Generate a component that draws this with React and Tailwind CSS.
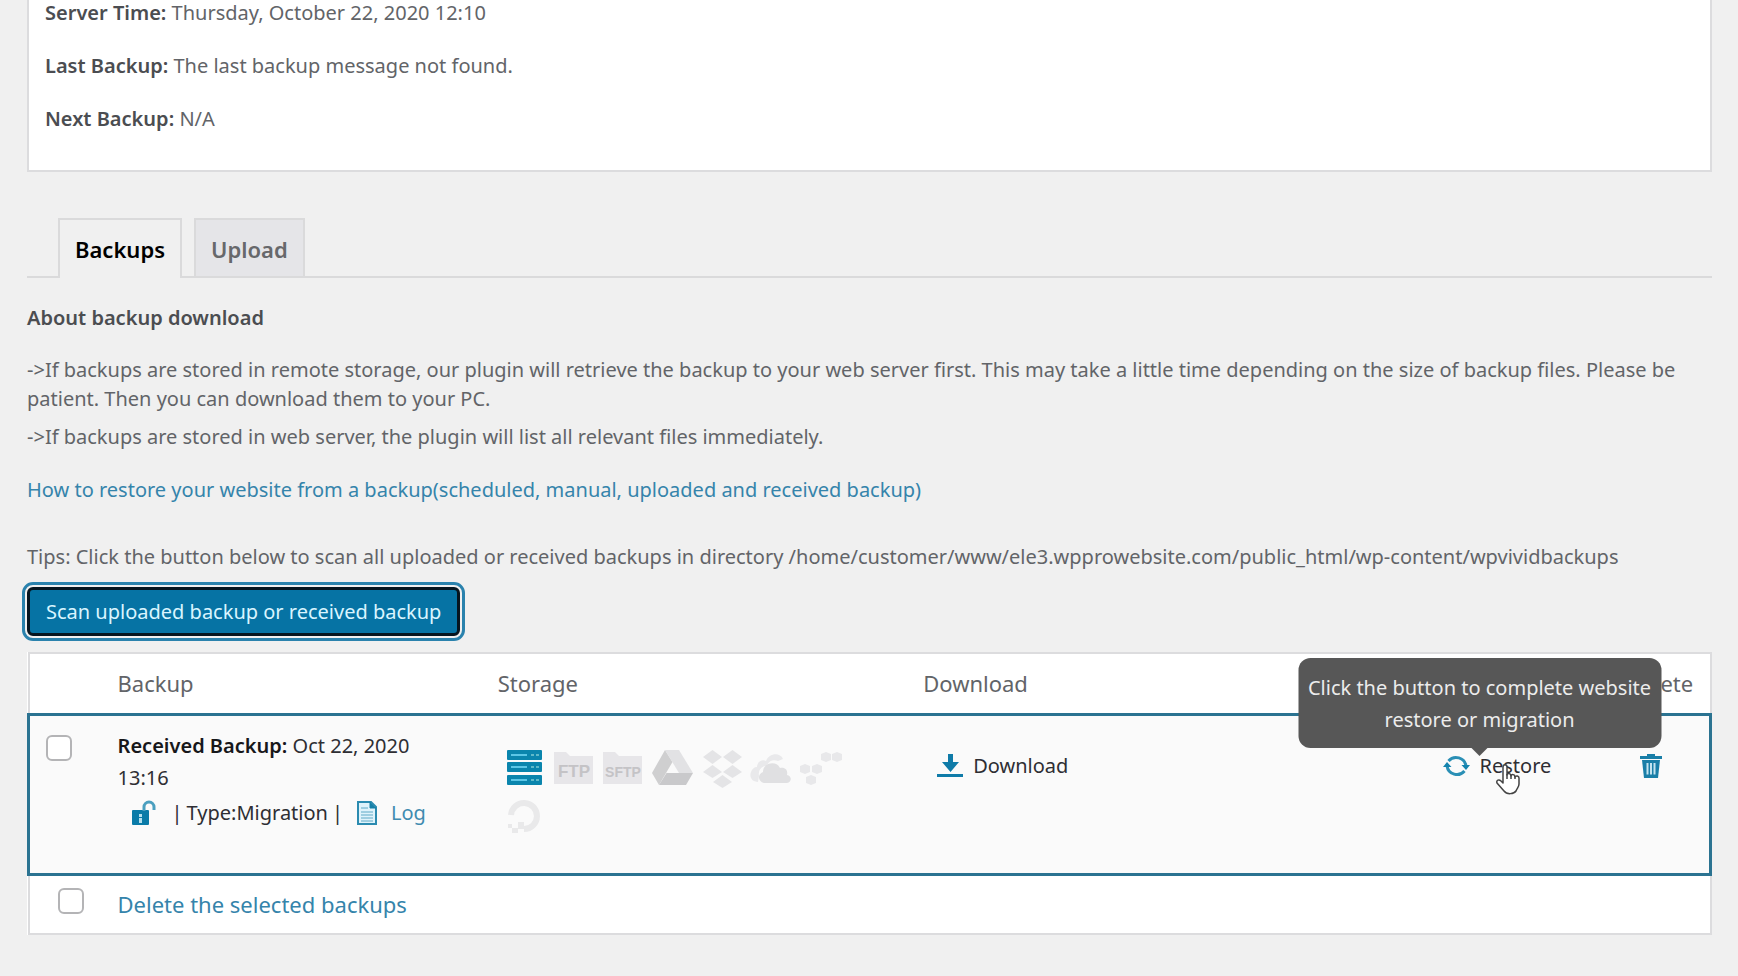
import React from "react";

const statusRows = [
  ["Server Time:", "Thursday, October 22, 2020 12:10"],
  ["Last Backup:", "The last backup message not found."],
  ["Next Backup:", "N/A"],
];

function ServerIcon() {
  return (
    <svg viewBox="0 0 41 41" className="h-[41px] w-[41px]" aria-hidden="true">
      {[3, 15, 28].map((y) => (
        <g key={y}>
          <rect x="0" y={y} width="35" height="10" rx="1" fill="#0a85ad" />
          <rect x="4" y={y + 4} width="16" height="2" fill="#5cc6e6" />
          <rect x="24" y={y + 4} width="3" height="2" fill="#5fb9c9" />
          <rect x="29" y={y + 4} width="3" height="2" fill="#5fb9c9" />
        </g>
      ))}
    </svg>
  );
}

function FolderIcon({ label, size }) {
  return (
    <svg viewBox="0 0 41 41" className="h-[41px] w-[41px] overflow-visible" aria-hidden="true">
      <path d="M-2 5h12l4 4h23v28H-2z" fill="#e7e6e9" />
      <text
        x="18"
        y="30"
        textAnchor="middle"
        fontSize={size}
        fontWeight="700"
        fontFamily="Liberation Sans, Arial, sans-serif"
        fill="#c4c3c6"
      >
        {label}
      </text>
    </svg>
  );
}

function DriveIcon() {
  return (
    <svg viewBox="0 0 41 41" className="h-[41px] w-[41px] overflow-visible" aria-hidden="true">
      <path d="M11 3-2 26l7 12 13.500-23z" fill="#cfcfd0" />
      <path d="M11 3h14l14 23H25z" fill="#e2e2e4" />
      <path d="M12.500 26H39l-7 12H5z" fill="#c9c9cb" />
    </svg>
  );
}

function DropboxIcon() {
  return (
    <svg viewBox="0 0 41 41" className="h-[41px] w-[41px]" aria-hidden="true" fill="#e4e4e6">
      <path d="M9.500 3 19 10l-9.500 7L0 10z" />
      <path d="M29.500 3 39 10l-9.500 7L20 10z" />
      <path d="M9.500 18 19 25l-9.500 6L0 25z" />
      <path d="M29.500 18 39 25l-9.500 6L20 25z" />
      <path d="m19.500 28 9.500 7-9.500 6-9.500-6z" />
    </svg>
  );
}

function OneDriveIcon() {
  return (
    <svg viewBox="0 0 41 41" className="h-[41px] w-[41px] overflow-visible" aria-hidden="true">
      <path
        d="M6 35C0 35-3 30-1 25c1-3 3-5 6-5 0-5 5-8 9-6 3-8 14-9 17-2l-5 2c-5-2-10 0-11 5-6 0-9 4-8 10z"
        fill="#e9e9eb"
      />
      <path
        d="M12 36c-6-1-7-9-1-11 0-9 13-12 17-4 6-1 8 3 7 7 5 1 5 7 0 8z"
        fill="#e0e0e2"
      />
    </svg>
  );
}

function S3Icon() {
  return (
    <svg viewBox="0 0 41 41" className="h-[41px] w-[41px] overflow-visible" aria-hidden="true" fill="#e8e8ea">
      <path d="m20 7 5-2 5 2v6l-5 2-5-2z" />
      <path d="m31 7 5-2 5 2v6l-5 2-5-2z" />
      <path d="m-1 19 5-2 5 2v6l-5 2-5-2z" />
      <path d="m11 19 5-2 5 2v6l-5 2-5-2z" />
      <path d="m5 30 5-2 5 2v6l-5 2-5-2z" />
    </svg>
  );
}

function OceanIcon() {
  return (
    <svg viewBox="0 0 41 41" className="h-[41px] w-[41px]" aria-hidden="true">
      <path d="M4 19a13 13 0 1 1 13 14" fill="none" stroke="#e9e9ea" strokeWidth="6" />
      <path d="M11 26h6v7h-6zM5 32h6v5H5zM1 28h4v4H1z" fill="#e9e9ea" />
    </svg>
  );
}

function UnlockIcon() {
  return (
    <svg viewBox="0 0 24 26" className="h-[26px] w-6" aria-hidden="true">
      <rect x="0" y="10" width="17" height="15" rx="1" fill="#0a7ba8" />
      <path d="M12 11V7a5 5 0 0 1 10 0v3" fill="none" stroke="#4b9fbf" strokeWidth="3" />
      <rect x="7" y="14" width="3" height="3" fill="#b5e0ee" />
      <rect x="7" y="18" width="3" height="5" fill="#b5e0ee" />
    </svg>
  );
}

function LogIcon() {
  return (
    <svg viewBox="0 0 20 24" className="h-6 w-5" aria-hidden="true">
      <path d="M1 1h13l5 5v17H1z" fill="#dff3fb" stroke="#2b8bb0" strokeWidth="2" />
      <path d="M13 1v6h6" fill="#1780a8" stroke="#1780a8" />
      <path d="M4 7h7M4 11h12M4 14h12M4 17h12M4 20h12" stroke="#5fa9c6" strokeWidth="1" />
    </svg>
  );
}

function DownloadIcon() {
  return (
    <svg viewBox="0 0 26 24" className="h-6 w-[26px]" aria-hidden="true" fill="#0f7ba8">
      <path d="M11 0h5v8h6l-8.500 10L5 8h6z" />
      <rect x="0" y="20" width="26" height="3" />
    </svg>
  );
}

function RestoreIcon() {
  return (
    <svg viewBox="0 0 27 24" className="h-6 w-[27px]" aria-hidden="true">
      <path d="M5.500 7A10 10 0 0 1 23 12" fill="none" stroke="#2a8fb5" strokeWidth="3" />
      <path d="M21.500 17A10 10 0 0 1 4 12" fill="none" stroke="#2a8fb5" strokeWidth="3" />
      <path d="M18.500 11H27l-4 5zM0 13l4-5 4.500 5z" fill="#1584ae" />
    </svg>
  );
}

function TrashIcon() {
  return (
    <svg viewBox="0 0 22 24" className="h-6 w-[22px]" aria-hidden="true">
      <path d="M0 2h7V0h8v2h7v3H0z" fill="#1a7fa8" />
      <path d="M2 6h18l-2 18H4z" fill="#1a7fa8" />
      <path d="M7.500 9v11.500M11 9v11.500M14.500 9v11.500" stroke="#c3e4f0" strokeWidth="2" />
    </svg>
  );
}

function HandPointer() {
  return (
    <svg
      viewBox="0 0 24 32"
      className="pointer-events-none absolute left-4 top-3 h-8 w-6"
      aria-hidden="true"
    >
      <path
        d="M7 20V4c0-3 4-3 4 0v8c0-2 4-2 4 1 0-2 4-2 4 1 1-2 4-1 4 1v6c0 3-2 4-3 7-2 3-9 4-12 0L1 20c-1-3 2-4 4-2z"
        fill="#fff"
        stroke="#444"
        strokeWidth="1.500"
        strokeLinejoin="round"
      />
      <path d="M11 11v5M15 12v4M19 13v3" stroke="#444" strokeWidth="1.500" />
    </svg>
  );
}

const checkboxClass =
  "block h-[26px] w-[26px] appearance-none rounded-md border-2 border-[#b4b4b6] bg-white checked:bg-[#0073aa]";

export default function App() {
  return (
    <div className="min-h-screen bg-[#f0f0f0] pb-10 pl-[27px] pr-[26px] font-['Noto_Sans','Open_Sans',sans-serif] text-[20px] leading-[29px] text-[#626468]">
      <section className="flex flex-col gap-[27px] border-2 border-t-0 border-[#dcdcde] bg-white px-4 pb-[38px] leading-[26px]">
        {statusRows.map(([label, value]) => (
          <p key={label}>
            <strong className="font-semibold text-[#4b4d51]">{label}</strong> {value}
          </p>
        ))}
      </section>

      <nav className="mt-[46px] flex gap-3 border-b-2 border-[#dadadb] pl-[31px] text-[22px] font-semibold">
        <a
          href="#backups"
          className="-mb-[2px] border-2 border-b-0 border-[#dadadb] bg-[#f0f0f0] px-[15px] pb-[14px] pt-[15px] text-black"
        >
          Backups
        </a>
        <a
          href="#upload"
          className="border-2 border-b-0 border-[#dadadb] bg-[#e5e5e8] px-[15px] pb-3 pt-[15px] text-[#67686b]"
        >
          Upload
        </a>
      </nav>

      <main>
        <h2 className="mt-[25px] font-semibold text-[#4b4d51]">About backup download</h2>
        <p className="mt-[23px]">
          -&gt;If backups are stored in remote storage, our plugin will retrieve the backup to your web
          server first. This may take a little time depending on the size of backup files. Please be
          patient. Then you can download them to your PC.
        </p>
        <p className="mt-[9px]">
          -&gt;If backups are stored in web server, the plugin will list all relevant files immediately.
        </p>
        <p className="mt-6">
          <a href="#how-to-restore" className="text-[#3584ab]">
            How to restore your website from a backup(scheduled, manual, uploaded and received backup)
          </a>
        </p>
        <p className="mt-[38px]">
          Tips: Click the button below to scan all uploaded or received backups in directory
          /home/customer/www/ele3.wpprowebsite.com/public_html/wp-content/wpvividbackups
        </p>
        <button
          type="button"
          className="mt-4 block rounded-md border-[3px] border-[#06151f] bg-[#0673a4] px-4 py-[7px] text-[#d9f5ff] outline-3 outline-offset-2 outline-[#2a82ad]"
        >
          Scan uploaded backup or received backup
        </button>

        <table className="mt-4 w-full table-fixed border-collapse border-2 border-[#dcdcde] bg-white text-left">
          <colgroup>
            <col className="w-[4.7%]" />
            <col className="w-[22.6%]" />
            <col className="w-[25.3%]" />
            <col className="w-[30.4%]" />
            <col className="w-[11.4%]" />
            <col className="w-[5.6%]" />
          </colgroup>
          <thead>
            <tr className="text-[22px]">
              <th />
              <th className="px-[10px] py-[15px] font-normal">Backup</th>
              <th className="px-[10px] py-[15px] font-normal">Storage</th>
              <th className="px-[10px] py-[15px] font-normal">Download</th>
              <th className="px-[10px] py-[15px] font-normal">Restore</th>
              <th className="px-[10px] py-[15px] font-normal">Delete</th>
            </tr>
          </thead>
          <tbody>
            <tr className="border-[3px] border-[#2b7391] bg-[#fafafa] align-top text-[#2e2e33]">
              <td className="pb-10 pl-4 pt-[19px]">
                <input type="checkbox" aria-label="Select backup" className={checkboxClass} />
              </td>
              <td className="pb-11 pl-[10px] pr-10 pt-[14px]">
                <div className="leading-8">
                  <strong className="font-semibold text-[#17171a]">Received Backup:</strong> Oct 22, 2020
                  13:16
                </div>
                <div className="mt-[3px] flex items-center whitespace-nowrap pl-[14px] leading-8">
                  <UnlockIcon />
                  <span className="ml-4 flex gap-1">
                    <span>|</span>
                    <span>Type:Migration</span>
                    <span>|</span>
                  </span>
                  <a href="#log" className="ml-[14px] flex items-center gap-[14px] text-[#3f8bb0]">
                    <LogIcon />
                    Log
                  </a>
                </div>
              </td>
              <td className="px-[19px] pt-[31px]">
                <div className="flex max-w-[345px] flex-wrap gap-2">
                  <ServerIcon />
                  <FolderIcon label="FTP" size={17} />
                  <FolderIcon label="SFTP" size={14} />
                  <DriveIcon />
                  <DropboxIcon />
                  <OneDriveIcon />
                  <S3Icon />
                  <OceanIcon />
                </div>
              </td>
              <td className="px-6 pt-[35px]">
                <button type="button" className="flex items-center gap-[10px]">
                  <DownloadIcon />
                  Download
                </button>
              </td>
              <td className="px-[18px] pt-[35px]">
                <button type="button" className="flex items-center gap-[10px]">
                  <RestoreIcon />
                  <span className="relative">
                    Restore
                    <span
                      role="tooltip"
                      className="absolute bottom-8 left-0 w-[363px] -translate-x-1/2 rounded-xl bg-[#575757] pb-3 pt-[14px] text-center leading-8 text-[#ececec]"
                    >
                      Click the button to complete website restore or migration
                      <span className="absolute left-1/2 top-full -ml-2 border-8 border-b-0 border-transparent border-t-[#575757]" />
                    </span>
                    <HandPointer />
                  </span>
                </button>
              </td>
              <td className="px-6 pt-[38px]">
                <button type="button" aria-label="Delete backup" className="block">
                  <TrashIcon />
                </button>
              </td>
            </tr>
          </tbody>
          <tfoot>
            <tr className="align-top text-[22px]">
              <td className="pl-7 pt-3">
                <input type="checkbox" aria-label="Select all backups" className={checkboxClass} />
              </td>
              <td colSpan={5} className="px-[10px] py-[14px]">
                <a href="#delete-selected" className="text-[#3584ab]">
                  Delete the selected backups
                </a>
              </td>
            </tr>
          </tfoot>
        </table>
      </main>
    </div>
  );
}
